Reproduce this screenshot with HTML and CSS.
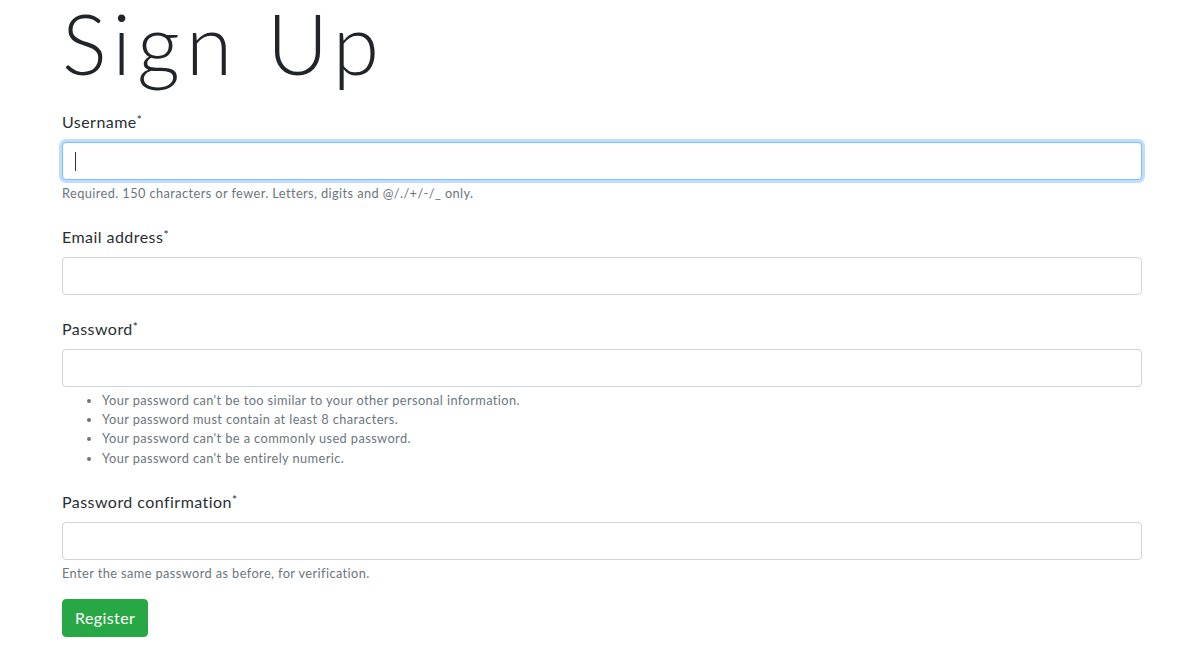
FILE: index.html
```html
<!DOCTYPE html>
<html lang="en">
<head>
<meta charset="utf-8">
<title>Sign Up</title>
<link rel="stylesheet" href="styles.css">
</head>
<body>
<main class="container">
  <h1 class="title">Sign Up</h1>
  <form class="signup" onsubmit="return false;">
    <div class="group">
      <label class="label" for="id_username">Username<span class="ast">*</span></label>
      <div class="field">
        <input class="input input-focus" type="text" id="id_username">
        <span class="caret"></span>
      </div>
      <small class="help">Required. 150 characters or fewer. Letters, digits and @/./+/-/_ only.</small>
    </div>
    <div class="group">
      <label class="label" for="id_email">Email address<span class="ast">*</span></label>
      <input class="input" type="email" id="id_email">
    </div>
    <div class="group">
      <label class="label" for="id_password1">Password<span class="ast">*</span></label>
      <input class="input" type="password" id="id_password1">
      <small class="help">
        <ul class="rules">
          <li>Your password can't be too similar to your other personal information.</li>
          <li>Your password must contain at least 8 characters.</li>
          <li>Your password can't be a commonly used password.</li>
          <li>Your password can't be entirely numeric.</li>
        </ul>
      </small>
    </div>
    <div class="group group-last">
      <label class="label" for="id_password2">Password confirmation<span class="ast">*</span></label>
      <input class="input" type="password" id="id_password2">
      <small class="help">Enter the same password as before, for verification.</small>
    </div>
    <button class="btn" type="submit">Register</button>
  </form>
</main>
</body>
</html>
```

FILE: styles.css
```css
* { box-sizing: border-box; }

html, body {
  margin: 0;
  padding: 0;
  background: #fff;
}

body {
  font-family: "Lato", "Noto Sans", "Liberation Sans", sans-serif;
  font-size: 16px;
  line-height: 1.5;
  color: #212529;
  overflow: hidden;
}

.container {
  padding: 1px 54px 0 62px;
}

.title {
  font-weight: 300;
  font-size: 84px;
  line-height: 1.2;
  margin: -8px 0 16px 0;
  letter-spacing: 6px;
  white-space: nowrap;
}

.group {
  margin-bottom: 22px;
}

.group-last {
  margin-bottom: 16px;
}

.label {
  display: inline-block;
  margin-bottom: 8px;
  font-size: 16px;
  line-height: 24px;
  letter-spacing: 0.45px;
  color: #2a2e33;
}

.ast {
  font-size: 12px;
  vertical-align: top;
  position: relative;
  top: -2px;
  letter-spacing: 0;
}

.field {
  position: relative;
}

.input {
  display: block;
  width: 100%;
  height: 38px;
  padding: 6px 12px;
  font: inherit;
  color: #495057;
  background: #fff;
  border: 1px solid #ced4da;
  border-radius: 4px;
  outline: none;
}

.input-focus {
  border-color: #80bdff;
  box-shadow: 0 0 0 3px rgba(0, 123, 255, 0.25);
}

.caret {
  position: absolute;
  left: 13px;
  top: 10px;
  width: 1px;
  height: 19px;
  background: #333;
}

.help {
  display: block;
  margin-top: 4px;
  font-size: 12.8px;
  line-height: 19.2px;
  letter-spacing: 0.4px;
  color: #6c757d;
}

.rules {
  margin: 0;
  padding-left: 40px;
}

.btn {
  display: inline-block;
  font: inherit;
  font-size: 16px;
  line-height: 24px;
  letter-spacing: 0.4px;
  padding: 6px 12px;
  color: #fff;
  background: #28a745;
  border: 1px solid #28a745;
  border-radius: 4px;
  cursor: pointer;
}
```
